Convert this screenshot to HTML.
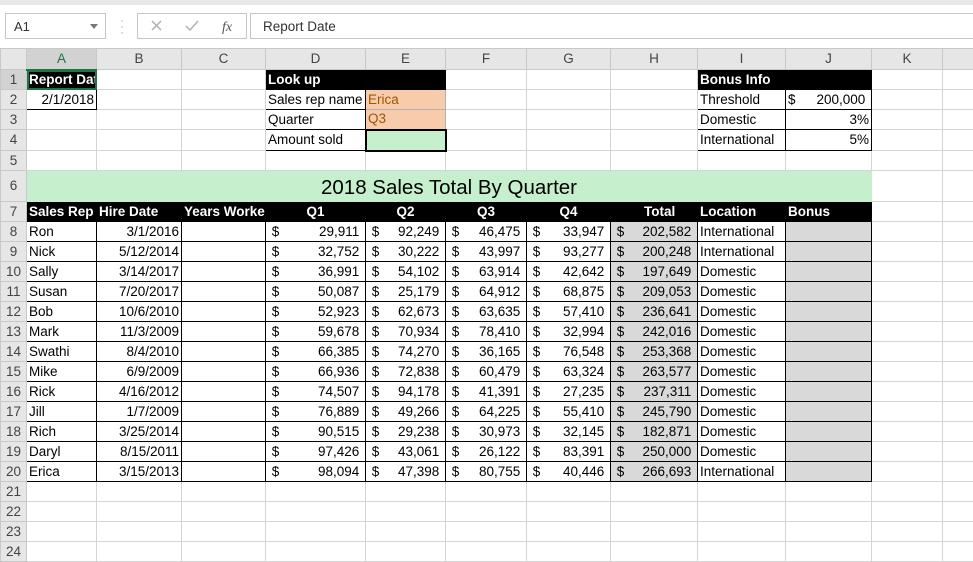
<!DOCTYPE html>
<html><head><meta charset="utf-8"><style>
*{box-sizing:border-box}
body{margin:0;width:973px;height:562px;overflow:hidden;background:#fff;font-family:"Liberation Sans",Arial,sans-serif;position:relative}
.top{position:absolute;left:0;top:0;width:973px;height:5px;background:#e8e8e8}
.nb{position:absolute;left:5px;top:13px;width:101px;height:26px;border:1px solid #c6c6c6;font-size:13px;padding:5px 0 0 8px;color:#333}
.nb:after{content:"";position:absolute;right:7px;top:10px;border-left:4px solid transparent;border-right:4px solid transparent;border-top:5px solid #777}
.dots{position:absolute;left:120px;top:17px;color:#aaa;font-size:12px;line-height:6px}
.fx{position:absolute;left:137px;top:13px;width:110px;height:26px;border:1px solid #c6c6c6}
.fb{position:absolute;left:250px;top:13px;width:730px;height:26px;border:1px solid #c6c6c6;font-size:13.5px;padding:5px 0 0 12px;color:#333}
table{position:absolute;left:0;top:48px;width:982px;border-collapse:collapse;table-layout:fixed;font-size:13.5px}
td{border:1px solid #d4d4d4;white-space:nowrap;overflow:hidden;padding:0 2px;height:20px;line-height:18px;color:#000}
tr.h td{background:#e6e6e6;color:#444;text-align:center;border-color:#c8c8c8;height:21px}
td.r{background:#e6e6e6;color:#444;text-align:center;border-color:#c8c8c8;padding:0}
.b{border:1px solid #000}
.k{background:#000;color:#fff;font-weight:bold;border-color:#000}
.g{background:#d9d9d9}
.rt{text-align:right}
.c{text-align:center}
.m{display:flex;justify-content:space-between}
.pe{background:#f8cbad;color:#9c5700;border-color:#b0b0b0}
</style></head><body>
<div class="top"></div>
<div class="nb">A1</div>
<div class="dots">·<br>·<br>·</div>
<div class="fx"><svg width="110" height="24"><path d="M14 7l9 9M23 7l-9 9" stroke="#b0b0b0" stroke-width="1.5"/><path d="M48 12l4 4 8-9" stroke="#b0b0b0" stroke-width="1.5" fill="none"/><text x="84" y="17" font-family="Liberation Serif" font-style="italic" font-size="14" fill="#555">fx</text></svg></div>
<div class="fb">Report Date</div>
<table>
<colgroup><col style="width:26px"><col style="width:70px"><col style="width:85px"><col style="width:84px"><col style="width:100px"><col style="width:80px"><col style="width:81px"><col style="width:84px"><col style="width:87px"><col style="width:88px"><col style="width:86px"><col style="width:71px"><col style="width:40px"></colgroup>
<tr class="h"><td></td><td style="background:#d2d2d2;color:#217346;border-bottom:2px solid #217346">A</td><td>B</td><td>C</td><td>D</td><td>E</td><td>F</td><td>G</td><td>H</td><td>I</td><td>J</td><td>K</td><td></td></tr>
<tr><td class="r" style="background:#d2d2d2">1</td><td class="k" style="outline:2px solid #217346;outline-offset:-2px">Report Date</td><td></td><td></td><td class="k">Look up</td><td class="k"></td><td></td><td></td><td></td><td class="k">Bonus Info</td><td class="k"></td><td></td><td></td></tr>
<tr><td class="r">2</td><td class="b rt">2/1/2018</td><td></td><td></td><td class="b">Sales rep name</td><td class="pe">Erica</td><td></td><td></td><td></td><td class="b">Threshold</td><td class="b"><div class="m"><span>$</span><span>200,000&nbsp;</span></div></td><td></td><td></td></tr>
<tr><td class="r">3</td><td></td><td></td><td></td><td class="b">Quarter</td><td class="pe">Q3</td><td></td><td></td><td></td><td class="b">Domestic</td><td class="b rt">3%</td><td></td><td></td></tr>
<tr><td class="r" style="height:21px">4</td><td></td><td></td><td></td><td class="b">Amount sold</td><td style="background:#c6efce;border:2px solid #000"></td><td></td><td></td><td></td><td class="b">International</td><td class="b rt">5%</td><td></td><td></td></tr>
<tr><td class="r">5</td><td></td><td></td><td></td><td></td><td></td><td></td><td></td><td></td><td></td><td></td><td></td><td></td></tr>
<tr><td class="r" style="height:31px">6</td><td colspan="10" class="c" style="background:#c6efce;font-size:20.5px;border-color:#c6efce;padding-top:4px">2018 Sales Total By Quarter</td><td></td><td></td></tr>
<tr><td class="r">7</td><td class="k">Sales Rep</td><td class="k">Hire Date</td><td class="k">Years Worked</td><td class="k c">Q1</td><td class="k c">Q2</td><td class="k c">Q3</td><td class="k c">Q4</td><td class="k c">&nbsp;&nbsp;&nbsp;Total</td><td class="k">Location</td><td class="k">Bonus</td><td></td><td></td></tr>
<tr><td class="r">8</td><td class="b">Ron</td><td class="b rt">3/1/2016</td><td class="b"></td><td class="b"><div class="m"><span>&nbsp;$</span><span>29,911&nbsp;</span></div></td><td class="b"><div class="m"><span>&nbsp;$</span><span>92,249&nbsp;</span></div></td><td class="b"><div class="m"><span>&nbsp;$</span><span>46,475&nbsp;</span></div></td><td class="b"><div class="m"><span>&nbsp;$</span><span>33,947&nbsp;</span></div></td><td class="b g"><div class="m"><span>&nbsp;$</span><span>202,582&nbsp;</span></div></td><td class="b">International</td><td class="b g"></td><td></td><td></td></tr>
<tr><td class="r">9</td><td class="b">Nick</td><td class="b rt">5/12/2014</td><td class="b"></td><td class="b"><div class="m"><span>&nbsp;$</span><span>32,752&nbsp;</span></div></td><td class="b"><div class="m"><span>&nbsp;$</span><span>30,222&nbsp;</span></div></td><td class="b"><div class="m"><span>&nbsp;$</span><span>43,997&nbsp;</span></div></td><td class="b"><div class="m"><span>&nbsp;$</span><span>93,277&nbsp;</span></div></td><td class="b g"><div class="m"><span>&nbsp;$</span><span>200,248&nbsp;</span></div></td><td class="b">International</td><td class="b g"></td><td></td><td></td></tr>
<tr><td class="r">10</td><td class="b">Sally</td><td class="b rt">3/14/2017</td><td class="b"></td><td class="b"><div class="m"><span>&nbsp;$</span><span>36,991&nbsp;</span></div></td><td class="b"><div class="m"><span>&nbsp;$</span><span>54,102&nbsp;</span></div></td><td class="b"><div class="m"><span>&nbsp;$</span><span>63,914&nbsp;</span></div></td><td class="b"><div class="m"><span>&nbsp;$</span><span>42,642&nbsp;</span></div></td><td class="b g"><div class="m"><span>&nbsp;$</span><span>197,649&nbsp;</span></div></td><td class="b">Domestic</td><td class="b g"></td><td></td><td></td></tr>
<tr><td class="r">11</td><td class="b">Susan</td><td class="b rt">7/20/2017</td><td class="b"></td><td class="b"><div class="m"><span>&nbsp;$</span><span>50,087&nbsp;</span></div></td><td class="b"><div class="m"><span>&nbsp;$</span><span>25,179&nbsp;</span></div></td><td class="b"><div class="m"><span>&nbsp;$</span><span>64,912&nbsp;</span></div></td><td class="b"><div class="m"><span>&nbsp;$</span><span>68,875&nbsp;</span></div></td><td class="b g"><div class="m"><span>&nbsp;$</span><span>209,053&nbsp;</span></div></td><td class="b">Domestic</td><td class="b g"></td><td></td><td></td></tr>
<tr><td class="r">12</td><td class="b">Bob</td><td class="b rt">10/6/2010</td><td class="b"></td><td class="b"><div class="m"><span>&nbsp;$</span><span>52,923&nbsp;</span></div></td><td class="b"><div class="m"><span>&nbsp;$</span><span>62,673&nbsp;</span></div></td><td class="b"><div class="m"><span>&nbsp;$</span><span>63,635&nbsp;</span></div></td><td class="b"><div class="m"><span>&nbsp;$</span><span>57,410&nbsp;</span></div></td><td class="b g"><div class="m"><span>&nbsp;$</span><span>236,641&nbsp;</span></div></td><td class="b">Domestic</td><td class="b g"></td><td></td><td></td></tr>
<tr><td class="r">13</td><td class="b">Mark</td><td class="b rt">11/3/2009</td><td class="b"></td><td class="b"><div class="m"><span>&nbsp;$</span><span>59,678&nbsp;</span></div></td><td class="b"><div class="m"><span>&nbsp;$</span><span>70,934&nbsp;</span></div></td><td class="b"><div class="m"><span>&nbsp;$</span><span>78,410&nbsp;</span></div></td><td class="b"><div class="m"><span>&nbsp;$</span><span>32,994&nbsp;</span></div></td><td class="b g"><div class="m"><span>&nbsp;$</span><span>242,016&nbsp;</span></div></td><td class="b">Domestic</td><td class="b g"></td><td></td><td></td></tr>
<tr><td class="r">14</td><td class="b">Swathi</td><td class="b rt">8/4/2010</td><td class="b"></td><td class="b"><div class="m"><span>&nbsp;$</span><span>66,385&nbsp;</span></div></td><td class="b"><div class="m"><span>&nbsp;$</span><span>74,270&nbsp;</span></div></td><td class="b"><div class="m"><span>&nbsp;$</span><span>36,165&nbsp;</span></div></td><td class="b"><div class="m"><span>&nbsp;$</span><span>76,548&nbsp;</span></div></td><td class="b g"><div class="m"><span>&nbsp;$</span><span>253,368&nbsp;</span></div></td><td class="b">Domestic</td><td class="b g"></td><td></td><td></td></tr>
<tr><td class="r">15</td><td class="b">Mike</td><td class="b rt">6/9/2009</td><td class="b"></td><td class="b"><div class="m"><span>&nbsp;$</span><span>66,936&nbsp;</span></div></td><td class="b"><div class="m"><span>&nbsp;$</span><span>72,838&nbsp;</span></div></td><td class="b"><div class="m"><span>&nbsp;$</span><span>60,479&nbsp;</span></div></td><td class="b"><div class="m"><span>&nbsp;$</span><span>63,324&nbsp;</span></div></td><td class="b g"><div class="m"><span>&nbsp;$</span><span>263,577&nbsp;</span></div></td><td class="b">Domestic</td><td class="b g"></td><td></td><td></td></tr>
<tr><td class="r">16</td><td class="b">Rick</td><td class="b rt">4/16/2012</td><td class="b"></td><td class="b"><div class="m"><span>&nbsp;$</span><span>74,507&nbsp;</span></div></td><td class="b"><div class="m"><span>&nbsp;$</span><span>94,178&nbsp;</span></div></td><td class="b"><div class="m"><span>&nbsp;$</span><span>41,391&nbsp;</span></div></td><td class="b"><div class="m"><span>&nbsp;$</span><span>27,235&nbsp;</span></div></td><td class="b g"><div class="m"><span>&nbsp;$</span><span>237,311&nbsp;</span></div></td><td class="b">Domestic</td><td class="b g"></td><td></td><td></td></tr>
<tr><td class="r">17</td><td class="b">Jill</td><td class="b rt">1/7/2009</td><td class="b"></td><td class="b"><div class="m"><span>&nbsp;$</span><span>76,889&nbsp;</span></div></td><td class="b"><div class="m"><span>&nbsp;$</span><span>49,266&nbsp;</span></div></td><td class="b"><div class="m"><span>&nbsp;$</span><span>64,225&nbsp;</span></div></td><td class="b"><div class="m"><span>&nbsp;$</span><span>55,410&nbsp;</span></div></td><td class="b g"><div class="m"><span>&nbsp;$</span><span>245,790&nbsp;</span></div></td><td class="b">Domestic</td><td class="b g"></td><td></td><td></td></tr>
<tr><td class="r">18</td><td class="b">Rich</td><td class="b rt">3/25/2014</td><td class="b"></td><td class="b"><div class="m"><span>&nbsp;$</span><span>90,515&nbsp;</span></div></td><td class="b"><div class="m"><span>&nbsp;$</span><span>29,238&nbsp;</span></div></td><td class="b"><div class="m"><span>&nbsp;$</span><span>30,973&nbsp;</span></div></td><td class="b"><div class="m"><span>&nbsp;$</span><span>32,145&nbsp;</span></div></td><td class="b g"><div class="m"><span>&nbsp;$</span><span>182,871&nbsp;</span></div></td><td class="b">Domestic</td><td class="b g"></td><td></td><td></td></tr>
<tr><td class="r">19</td><td class="b">Daryl</td><td class="b rt">8/15/2011</td><td class="b"></td><td class="b"><div class="m"><span>&nbsp;$</span><span>97,426&nbsp;</span></div></td><td class="b"><div class="m"><span>&nbsp;$</span><span>43,061&nbsp;</span></div></td><td class="b"><div class="m"><span>&nbsp;$</span><span>26,122&nbsp;</span></div></td><td class="b"><div class="m"><span>&nbsp;$</span><span>83,391&nbsp;</span></div></td><td class="b g"><div class="m"><span>&nbsp;$</span><span>250,000&nbsp;</span></div></td><td class="b">Domestic</td><td class="b g"></td><td></td><td></td></tr>
<tr><td class="r">20</td><td class="b">Erica</td><td class="b rt">3/15/2013</td><td class="b"></td><td class="b"><div class="m"><span>&nbsp;$</span><span>98,094&nbsp;</span></div></td><td class="b"><div class="m"><span>&nbsp;$</span><span>47,398&nbsp;</span></div></td><td class="b"><div class="m"><span>&nbsp;$</span><span>80,755&nbsp;</span></div></td><td class="b"><div class="m"><span>&nbsp;$</span><span>40,446&nbsp;</span></div></td><td class="b g"><div class="m"><span>&nbsp;$</span><span>266,693&nbsp;</span></div></td><td class="b">International</td><td class="b g"></td><td></td><td></td></tr>
<tr><td class="r">21</td><td></td><td></td><td></td><td></td><td></td><td></td><td></td><td></td><td></td><td></td><td></td><td></td></tr>
<tr><td class="r">22</td><td></td><td></td><td></td><td></td><td></td><td></td><td></td><td></td><td></td><td></td><td></td><td></td></tr>
<tr><td class="r">23</td><td></td><td></td><td></td><td></td><td></td><td></td><td></td><td></td><td></td><td></td><td></td><td></td></tr>
<tr><td class="r">24</td><td></td><td></td><td></td><td></td><td></td><td></td><td></td><td></td><td></td><td></td><td></td><td></td></tr>
</table>
</body></html>
